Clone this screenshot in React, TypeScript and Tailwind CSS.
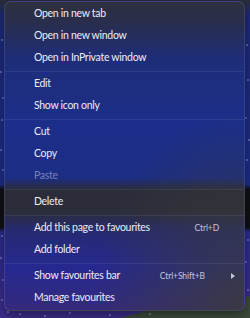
import React from 'react';

type Item =
  | { kind: 'sep' }
  | { kind: 'item'; label: string; shortcut?: string; sub?: boolean; disabled?: boolean };

const items: Item[] = [
  { kind: 'item', label: 'Open in new tab' },
  { kind: 'item', label: 'Open in new window' },
  { kind: 'item', label: 'Open in InPrivate window' },
  { kind: 'sep' },
  { kind: 'item', label: 'Edit' },
  { kind: 'item', label: 'Show icon only' },
  { kind: 'sep' },
  { kind: 'item', label: 'Cut' },
  { kind: 'item', label: 'Copy' },
  { kind: 'item', label: 'Paste', disabled: true },
  { kind: 'sep' },
  { kind: 'item', label: 'Delete' },
  { kind: 'sep' },
  { kind: 'item', label: 'Add this page to favourites', shortcut: 'Ctrl+D' },
  { kind: 'item', label: 'Add folder' },
  { kind: 'sep' },
  { kind: 'item', label: 'Show favourites bar', shortcut: 'Ctrl+Shift+B', sub: true },
  { kind: 'item', label: 'Manage favourites' },
];

// desktop wallpaper behind the acrylic menu: star field + dark band + hill
function Wallpaper() {
  const stars = [
    [2, 40], [1, 72], [3, 98], [2, 120], [1, 150], [3, 170], [2, 236], [1, 258], [3, 280], [2, 300],
    [247, 45], [248, 80], [246, 118], [249, 140], [247, 160], [248, 240], [246, 262], [248, 290],
    [20, 314], [45, 316], [70, 313], [110, 315], [150, 314], [8, 312],
  ];
  return (
    <svg className="absolute inset-0" width="250" height="318" viewBox="0 0 250 318">
      <defs>
        <linearGradient id="sky" x1="0" y1="0" x2="0" y2="1">
          <stop offset="0" stopColor="#2a2d36" />
          <stop offset="0.05" stopColor="#1d2a78" />
          <stop offset="0.58" stopColor="#1c2c86" />
          <stop offset="0.595" stopColor="#0f1014" />
          <stop offset="0.715" stopColor="#0f1014" />
          <stop offset="0.73" stopColor="#2a2c8c" />
          <stop offset="1" stopColor="#3c2c8a" />
        </linearGradient>
      </defs>
      <rect width="250" height="318" fill="url(#sky)" />
      <path d="M120 318 L150 310 L190 306 L230 300 L250 296 L250 318 Z" fill="#3b4a3a" />
      {stars.map(([x, y], i) => (
        <circle key={i} cx={x} cy={y} r="0.7" fill="#b9c2ff" />
      ))}
    </svg>
  );
}

export default function App() {
  return (
    <div className="relative h-[318px] w-[250px] overflow-hidden font-['Lato',sans-serif]">
      <Wallpaper />
      <div className="relative ml-[4px] mt-[1px] flex h-[310px] w-[241px] flex-col overflow-hidden rounded-[7px] border border-white/10 bg-[linear-gradient(180deg,#2d303e_0%,#292e4e_7%,#1f2d78_18%,#1b2e8a_40%,#1c2d84_57%,#2a2c3a_61%,#2b2d3a_68%,#262a70_74%,#262890_86%,#342a7c_100%)] py-px shadow-[0_4px_12px_rgba(0,0,0,0.4)]">
        <div className="pointer-events-none absolute inset-0 bg-[radial-gradient(ellipse_at_100%_100%,rgba(60,60,56,0.85)_0%,rgba(60,60,56,0)_45%)]" />
        {items.map((it, i) =>
          it.kind === 'sep' ? (
            <div key={i} className="relative mb-px mt-[2px] h-px bg-white/[0.08]" />
          ) : (
            <div
              key={i}
              className={`relative flex h-[22px] shrink-0 items-center pl-[29px] text-[10.5px] tracking-[-0.3px] ${
                it.disabled ? 'text-[#7a82b8]' : 'text-[#ececf4]'
              }`}
            >
              <span className="flex-1 whitespace-nowrap">{it.label}</span>
              {it.shortcut && (
                <span
                  className={`text-[8.5px] tracking-[-0.1px] text-[#c4c6d6] ${it.sub ? 'mr-[26px]' : 'mr-[25px]'}`}
                >
                  {it.shortcut}
                </span>
              )}
              {it.sub && (
                <svg width="4" height="6" viewBox="0 0 4 6" className="mr-[9px]">
                  <path d="M0 0 L4 3 L0 6 Z" fill="#c4c6d6" />
                </svg>
              )}
            </div>
          ),
        )}
      </div>
    </div>
  );
}
